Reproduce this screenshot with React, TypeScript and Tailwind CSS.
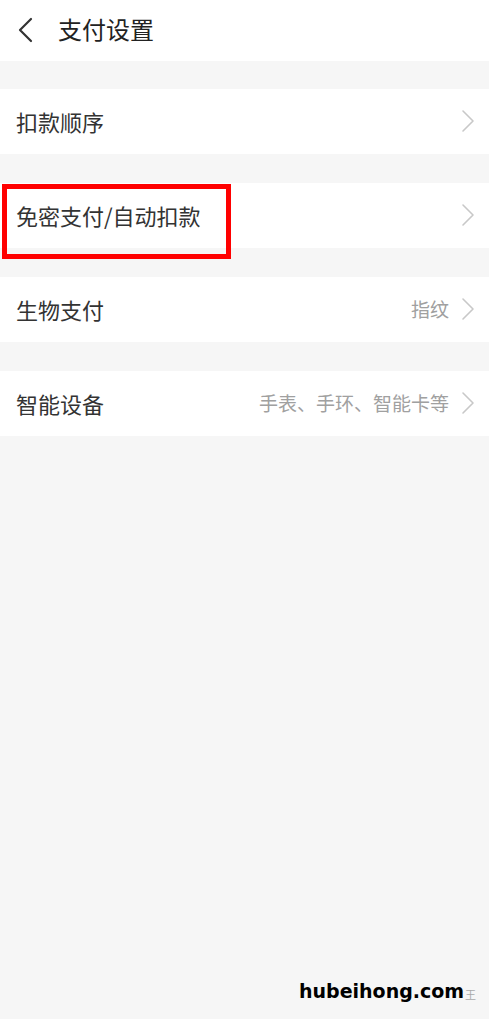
import React from 'react'

const font = { fontFamily: '"Noto Sans CJK SC", "Noto Sans", sans-serif' }

function Chevron() {
  return (
    <svg width="14" height="24" viewBox="0 0 14 24" fill="none" className="shrink-0">
      <path d="M2 2 L12 12 L2 22" stroke="#c8c8c8" strokeWidth="1.6" strokeLinecap="round" strokeLinejoin="round" />
    </svg>
  )
}

function Row({ label, value }: { label: string; value?: string }) {
  return (
    <div className="h-[65px] bg-white flex items-center justify-between pl-4 pr-[14px] pb-[2px]">
      <span className="text-[22px] text-[#333333] leading-none">{label}</span>
      <div className="flex items-center gap-[12px]">
        {value && <span className="text-[19px] text-[#a0a0a0] leading-none">{value}</span>}
        <Chevron />
      </div>
    </div>
  )
}

export default function App() {
  return (
    <div className="relative w-[489px] h-[1019px] bg-[#f6f6f6] overflow-hidden" style={font}>
      {/* Header */}
      <div className="h-[61px] bg-white flex items-center pb-[4px]">
        <div className="w-[58px] flex items-center pl-[17px] pt-[2px]">
          <svg width="16" height="26" viewBox="0 0 16 26" fill="none">
            <path d="M14 2 L3 13 L14 24" stroke="#333" strokeWidth="2.2" strokeLinecap="round" strokeLinejoin="round" />
          </svg>
        </div>
        <span className="text-[24px] text-[#222222] leading-none">支付设置</span>
      </div>

      <div className="flex flex-col gap-[29px] pt-[28px]">
        <Row label="扣款顺序" />
        <Row label="免密支付/自动扣款" />
        <Row label="生物支付" value="指纹" />
        <Row label="智能设备" value="手表、手环、智能卡等" />
      </div>

      {/* highlight box */}
      <div className="absolute left-[2px] top-[184px] w-[229px] h-[75px] border-[5px] border-[#ff0000]" />

      {/* watermark */}
      <div className="absolute left-[299px] top-[982px] flex items-end gap-[1px]">
        <span
          className="text-[19px] font-bold text-black leading-none"
          style={{ fontFamily: '"DejaVu Sans", sans-serif' }}
        >
          hubeihong.com
        </span>
        <span className="text-[11px] text-[#aaaaaa] leading-none pb-[1px]">王</span>
      </div>
    </div>
  )
}
